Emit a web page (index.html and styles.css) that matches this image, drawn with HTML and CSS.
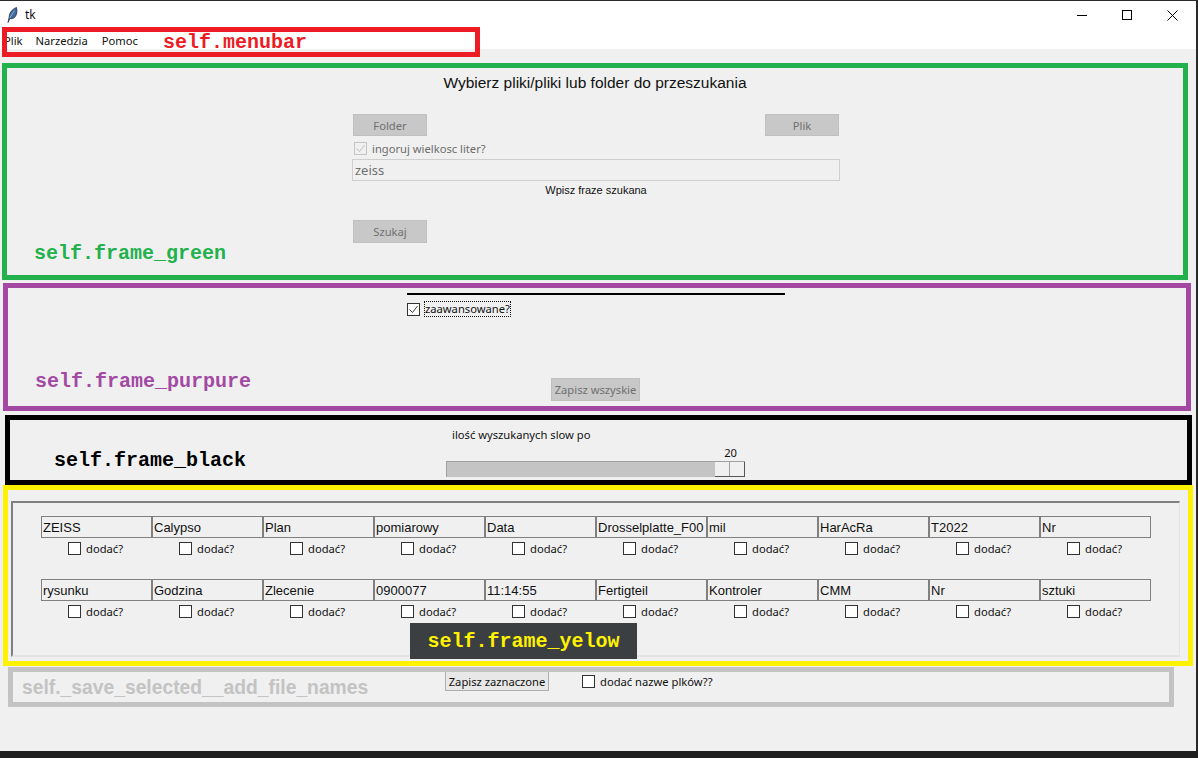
FILE: index.html
```html
<!DOCTYPE html>
<html>
	<head>
		<meta charset="UTF-8">
		<title>tk</title>
		<link rel="stylesheet" href="styles.css">
	</head>
	<body>
		<div id="window">
			<div class="titlebar">
				<svg class="feather" width="11" height="16" viewBox="0 0 11 16"><path d="M1 15.5L2.2 10C2 6.5 5 2 9.5 0.5C10.5 4 10 8 7.5 10.5C6 11.8 4.2 11.8 3 11.5Z" fill="#3f6a9c" stroke="#16243a" stroke-width="0.7"/><path d="M2.6 11L7.5 3.5" stroke="#b8cbe0" stroke-width="0.7"/></svg>
				<span class="title">tk</span>
				<div class="controls">
					<svg width="10" height="10" viewBox="0 0 10 10"><path d="M0 5.5H10" stroke="#000" stroke-width="1"/></svg>
					<svg width="10" height="10" viewBox="0 0 10 10"><rect x="0.5" y="0.5" width="9" height="9" fill="none" stroke="#000"/></svg>
					<svg width="11" height="11" viewBox="0 0 11 11"><path d="M0.5 0.5L10.5 10.5M10.5 0.5L0.5 10.5" stroke="#000" stroke-width="1"/></svg>
				</div>
			</div>
			<div class="menubar">
				<span class="menu-plik">Plik</span>
				<span class="menu-narzedzia">Narzedzia</span>
				<span class="menu-pomoc">Pomoc</span>
				<div class="menubar-mark"><span class="mono red">self.menubar</span></div>
			</div>

			<div class="frame frame-green">
				<h1>Wybierz pliki/pliki lub folder do przeszukania</h1>
				<div class="search">
					<div class="search-buttons">
						<button class="btn-off">Folder</button>
						<button class="btn-off">Plik</button>
					</div>
					<label class="check-row off">
						<span class="box off">
							<svg width="11" height="11" viewBox="0 0 11 11"><path d="M1.5 5.5L4.5 8.5L9.5 2" fill="none" stroke="#c0c0c0" stroke-width="1"/></svg>
						</span>
						ingoruj wielkosc liter?
					</label>
					<input class="phrase" type="text" value="zeiss" readonly>
					<p class="hint">Wpisz fraze szukana</p>
					<button class="btn-off">Szukaj</button>
				</div>
				<span class="mono tag tag-green">self.frame_green</span>
			</div>

			<div class="frame frame-purple">
				<hr class="sep">
				<label class="check-row adv">
					<span class="box">
						<svg width="11" height="11" viewBox="0 0 11 11"><path d="M1.5 5.5L4.5 8.5L9.5 2" fill="none" stroke="#444" stroke-width="1"/></svg>
					</span>
					<span class="focused">zaawansowane?</span>
				</label>
				<button class="btn-off save-all">Zapisz wszyskie</button>
				<span class="mono tag tag-purple">self.frame_purpure</span>
			</div>

			<div class="frame frame-black">
				<div class="scale">
					<p class="scale-label">ilość wyszukanych slow po</p>
					<p class="scale-value">20</p>
					<div class="trough"><div class="thumb"></div></div>
				</div>
				<span class="mono tag tag-black">self.frame_black</span>
			</div>

			<div class="frame frame-yellow">
				<div class="words">
					<div class="word"><input class="cell" type="text" value="ZEISS" readonly><label class="add"><span class="box"></span>dodać?</label></div>
					<div class="word"><input class="cell" type="text" value="Calypso" readonly><label class="add"><span class="box"></span>dodać?</label></div>
					<div class="word"><input class="cell" type="text" value="Plan" readonly><label class="add"><span class="box"></span>dodać?</label></div>
					<div class="word"><input class="cell" type="text" value="pomiarowy" readonly><label class="add"><span class="box"></span>dodać?</label></div>
					<div class="word"><input class="cell" type="text" value="Data" readonly><label class="add"><span class="box"></span>dodać?</label></div>
					<div class="word"><input class="cell" type="text" value="Drosselplatte_F00" readonly><label class="add"><span class="box"></span>dodać?</label></div>
					<div class="word"><input class="cell" type="text" value="mil" readonly><label class="add"><span class="box"></span>dodać?</label></div>
					<div class="word"><input class="cell" type="text" value="HarAcRa" readonly><label class="add"><span class="box"></span>dodać?</label></div>
					<div class="word"><input class="cell" type="text" value="T2022" readonly><label class="add"><span class="box"></span>dodać?</label></div>
					<div class="word"><input class="cell" type="text" value="Nr" readonly><label class="add"><span class="box"></span>dodać?</label></div>
					<div class="word"><input class="cell" type="text" value="rysunku" readonly><label class="add"><span class="box"></span>dodać?</label></div>
					<div class="word"><input class="cell" type="text" value="Godzina" readonly><label class="add"><span class="box"></span>dodać?</label></div>
					<div class="word"><input class="cell" type="text" value="Zlecenie" readonly><label class="add"><span class="box"></span>dodać?</label></div>
					<div class="word"><input class="cell" type="text" value="0900077" readonly><label class="add"><span class="box"></span>dodać?</label></div>
					<div class="word"><input class="cell" type="text" value="11:14:55" readonly><label class="add"><span class="box"></span>dodać?</label></div>
					<div class="word"><input class="cell" type="text" value="Fertigteil" readonly><label class="add"><span class="box"></span>dodać?</label></div>
					<div class="word"><input class="cell" type="text" value="Kontroler" readonly><label class="add"><span class="box"></span>dodać?</label></div>
					<div class="word"><input class="cell" type="text" value="CMM" readonly><label class="add"><span class="box"></span>dodać?</label></div>
					<div class="word"><input class="cell" type="text" value="Nr" readonly><label class="add"><span class="box"></span>dodać?</label></div>
					<div class="word"><input class="cell" type="text" value="sztuki" readonly><label class="add"><span class="box"></span>dodać?</label></div>
				</div>
				<div class="tag-yellow"><span class="mono">self.frame_yelow</span></div>
			</div>

			<div class="frame frame-gray">
				<button class="save-selected">Zapisz zaznaczone</button>
				<label class="check-row names"><span class="box"></span>dodać nazwe plków??</label>
				<span class="tag-gray">self._save_selected__add_file_names</span>
			</div>

			<div class="taskbar"></div>
		</div>
	</body>
</html>
```

FILE: styles.css
```css
* {
	margin: 0;
	padding: 0;
	box-sizing: border-box;
}
body {
	width: 1198px;
	height: 758px;
	overflow: hidden;
	font-family: "Noto Sans", "Liberation Sans", sans-serif;
	font-size: 11.2px;
	color: #111;
}
#window {
	display: flex;
	flex-direction: column;
	height: 758px;
	background-color: #f0f0f0;
	border-top: 1px solid #2a2a2a;
	border-right: 2px solid #2a2a2a;
}
.titlebar {
	display: flex;
	align-items: center;
	height: 23px;
	background-color: white;
	padding: 4px 0 0 7px;
}
.title {
	margin-left: 7px;
	font-size: 12px;
}
.controls {
	display: flex;
	align-items: center;
	gap: 35px;
	margin: 1px 18px 0 auto;
}
.menubar {
	position: relative;
	display: flex;
	align-items: center;
	height: 25px;
	background-color: white;
	padding-top: 8px;
	font-size: 11.2px;
}
.menu-plik {
	margin-left: 4px;
}
.menu-narzedzia {
	margin-left: 13px;
}
.menu-pomoc {
	margin-left: 14px;
}
.menubar-mark {
	position: absolute;
	left: 2px;
	top: 3px;
	display: flex;
	align-items: center;
	width: 478px;
	height: 30px;
	border: 5px solid #ed1c24;
	padding: 1px 0 0 156px;
}
.mono {
	font-family: "Liberation Mono", monospace;
	font-size: 20px;
	font-weight: bold;
	line-height: 22px;
	white-space: nowrap;
}
.red {
	color: #ed1c24;
}
.frame {
	position: relative;
	border: 5px solid black;
}
.tag {
	position: absolute;
}

/* frame green */
.frame-green {
	width: 1186px;
	height: 217px;
	margin: 14px 0 0 2px;
	border-color: #22b14c;
}
.frame-green h1 {
	margin-top: 5px;
	font-family: "Liberation Sans", sans-serif;
	font-size: 15.5px;
	font-weight: normal;
	line-height: 20px;
	text-align: center;
	color: #111;
}
.search {
	width: 488px;
	margin: 21px 0 0 345px;
}
.search-buttons {
	display: flex;
	justify-content: space-between;
	padding: 0 1px;
}
.btn-off {
	width: 74px;
	height: 23px;
	margin-left: 1px;
	border: 1px solid #c0c0c0;
	background-color: #c8c8c8;
	color: #707070;
	font-family: inherit;
	font-size: 11.2px;
}
.search-buttons .btn-off {
	margin-left: 0;
	height: 22px;
}
.check-row {
	display: flex;
	align-items: center;
	gap: 5px;
}
.check-row.off {
	height: 18px;
	margin: 3px 0 2px 2px;
	color: #6d6d6d;
}
.box {
	display: flex;
	align-items: center;
	justify-content: center;
	flex-shrink: 0;
	width: 13px;
	height: 13px;
	border: 1px solid #333;
	background-color: white;
}
.box.off {
	border-color: #c4c4c4;
	background-color: #f0f0f0;
}
.phrase {
	display: block;
	width: 488px;
	height: 22px;
	border: 1px solid #cfcfcf;
	background-color: #f0f0f0;
	padding-left: 2px;
	font-family: inherit;
	font-size: 13px;
	color: #707070;
	outline: none;
}
.hint {
	margin: 2px 0 22px;
	font-family: "Liberation Sans", sans-serif;
	font-size: 11px;
	line-height: 15px;
	text-align: center;
}
.tag-green {
	left: 27px;
	top: 175px;
	color: #22b14c;
}

/* frame purple */
.frame-purple {
	width: 1188px;
	height: 128px;
	margin: 3px 0 0 3px;
	border-color: #a349a4;
}
.sep {
	width: 378px;
	height: 2px;
	margin: 5px 0 0 399px;
	border: none;
	background-color: black;
}
.adv {
	width: 104px;
	height: 16px;
	margin: 6px 0 0 399px;
	gap: 4px;
}
.focused {
	border: 1px dotted #111;
	line-height: 14px;
	padding: 0;
}
.save-all {
	display: block;
	width: 89px;
	height: 23px;
	margin: 61px 0 0 543px;
}
.tag-purple {
	left: 27px;
	top: 83px;
	color: #a349a4;
}

/* frame black */
.frame-black {
	width: 1187px;
	height: 70px;
	margin: 4px 0 0 5px;
}
.scale {
	width: 299px;
	margin-left: 436px;
}
.scale-label {
	margin: 7px 0 0 6px;
	line-height: 16px;
}
.scale-value {
	margin: 2px 8px 0 0;
	line-height: 16px;
	text-align: right;
}
.trough {
	display: flex;
	justify-content: flex-end;
	height: 16px;
	border-top: 1px solid #a0a0a0;
	border-left: 1px solid #a0a0a0;
	background-color: #c4c4c4;
}
.thumb {
	width: 30px;
	height: 15px;
	border-right: 1px solid #555;
	border-bottom: 1px solid #555;
	background: linear-gradient(to right, #f0f0f0 14px, #a0a0a0 14px, #a0a0a0 15px, #f0f0f0 15px);
}
.tag-black {
	left: 44px;
	top: 30px;
	color: black;
}

/* frame yellow */
.frame-yellow {
	width: 1190px;
	height: 181px;
	margin-left: 3px;
	border-color: #fff200;
}
.words {
	display: grid;
	grid-template-columns: repeat(10, 111px);
	row-gap: 22px;
	align-content: start;
	width: 1169px;
	height: 156px;
	margin: 11px 0 0 3px;
	border: 2px solid #e4e4e4;
	border-top-color: #808080;
	border-left-color: #808080;
	border-right-width: 1px;
	padding: 13px 0 0 28px;
}
.cell {
	display: block;
	width: 111px;
	height: 22px;
	border: 1px solid #808080;
	background-color: #f0f0f0;
	padding-left: 1px;
	font-family: "Liberation Sans", sans-serif;
	font-size: 13px;
	color: #111;
	outline: none;
}
.add {
	display: flex;
	align-items: center;
	gap: 5px;
	height: 17px;
	margin-top: 2px;
	padding-left: 27px;
}
.tag-yellow {
	position: absolute;
	left: 402px;
	top: 133px;
	display: flex;
	align-items: center;
	justify-content: center;
	width: 227px;
	height: 36px;
	padding-top: 1px;
	background-color: #3b3f42;
	color: #fff200;
}

/* frame gray */
.frame-gray {
	display: flex;
	width: 1166px;
	height: 40px;
	margin: 1px 0 0 8px;
	border-color: #c3c3c3;
}
.save-selected {
	width: 104px;
	height: 19px;
	margin-left: 432px;
	border: 1px solid #adadad;
	border-top: none;
	background-color: #e8e8e8;
	font-family: inherit;
	font-size: 11.2px;
	color: #111;
}
.names {
	height: 19px;
	margin-left: 33px;
}
.tag-gray {
	position: absolute;
	left: 9px;
	top: 4px;
	font-family: "Liberation Sans", sans-serif;
	font-size: 19.3px;
	font-weight: bold;
	line-height: 24px;
	color: #c3c3c3;
}
.taskbar {
	height: 7px;
	margin-top: auto;
	margin-right: -2px;
	background-color: #1f1f1f;
}
```
